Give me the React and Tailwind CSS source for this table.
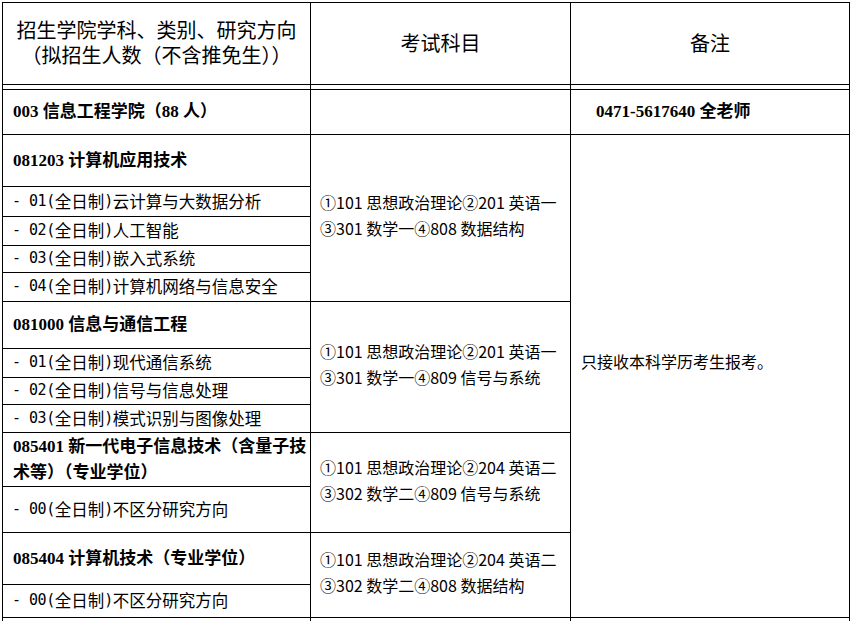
import React from "react";

const SANS = "font-['Noto_Sans_CJK_SC',sans-serif]";
const MONO = "font-['DejaVu_Sans_Mono','Liberation_Mono',monospace] text-[15px] tracking-[-0.5px]";
const HEAD = "font-['Liberation_Serif','Noto_Sans_CJK_SC',serif] font-bold";

function LeftHead({ h, children }) {
  return (
    <div className={`${h} flex items-center border-b border-black pl-[10px] text-[17px] leading-[26px] whitespace-nowrap ${HEAD}`}>
      <div>{children}</div>
    </div>
  );
}

function LeftSub({ h, code, name }) {
  return (
    <div className={`${h} flex items-center border-b border-black pl-[9px] pb-[2px] text-[16.5px] leading-[20px] whitespace-nowrap ${SANS}`}>
      <span className={MONO}>- {code}(</span>
      <span>全日制</span>
      <span className={MONO}>)</span>
      <span>{name}</span>
    </div>
  );
}

function Exam({ h, a, b }) {
  return (
    <div className={`${h} flex items-center border-b border-black pl-[9px] pb-[6px] text-[16px] leading-[26px] whitespace-nowrap ${SANS}`}>
      <div>
        <div>{a}</div>
        <div>{b}</div>
      </div>
    </div>
  );
}

export default function App() {
  return (
    <div className="w-[852px] h-[621px] overflow-hidden bg-white pt-[2px] pl-[2px] text-black">
      <div className="w-[848px] border-t border-l border-r border-black">
        {/* header */}
        <div className={`flex h-[82px] border-b border-black text-[20px] leading-[25px] ${SANS}`}>
          <div className="w-[307px] flex items-center justify-center text-center pb-[4px]">
            <div>
              <div>招生学院学科、类别、研究方向</div>
              <div>（拟招生人数（不含推免生））</div>
            </div>
          </div>
          <div className="w-[260px] border-l border-black flex items-center justify-center pb-[2px]">考试科目</div>
          <div className="w-[279px] border-l border-black flex items-center justify-center pb-[2px]">备注</div>
        </div>
        {/* double line spacer */}
        <div className="flex h-[5px] border-b border-black">
          <div className="w-[307px]" />
          <div className="w-[260px] border-l border-black" />
          <div className="w-[279px] border-l border-black" />
        </div>
        {/* body */}
        <div className="flex">
          <div className="w-[307px] flex flex-col">
            <LeftHead h="h-[45px]">003 信息工程学院（88 人）</LeftHead>
            <LeftHead h="h-[52px]">081203 计算机应用技术</LeftHead>
            <LeftSub h="h-[30px]" code="01" name="云计算与大数据分析" />
            <LeftSub h="h-[29px]" code="02" name="人工智能" />
            <LeftSub h="h-[27px]" code="03" name="嵌入式系统" />
            <LeftSub h="h-[29px]" code="04" name="计算机网络与信息安全" />
            <LeftHead h="h-[47px]">081000 信息与通信工程</LeftHead>
            <LeftSub h="h-[29px]" code="01" name="现代通信系统" />
            <LeftSub h="h-[27px]" code="02" name="信号与信息处理" />
            <LeftSub h="h-[28px]" code="03" name="模式识别与图像处理" />
            <LeftHead h="h-[54px]">
              085401 新一代电子信息技术（含量子技
              <br />
              术等）（专业学位）
            </LeftHead>
            <LeftSub h="h-[46px]" code="00" name="不区分研究方向" />
            <LeftHead h="h-[52px]">085404 计算机技术（专业学位）</LeftHead>
            <LeftSub h="h-[33px]" code="00" name="不区分研究方向" />
            <div className="h-[30px]" />
          </div>
          <div className="w-[260px] border-l border-black flex flex-col">
            <div className="h-[45px] border-b border-black" />
            <Exam h="h-[167px]" a="①101 思想政治理论②201 英语一" b="③301 数学一④808 数据结构" />
            <Exam h="h-[131px]" a="①101 思想政治理论②201 英语一" b="③301 数学一④809 信号与系统" />
            <Exam h="h-[100px]" a="①101 思想政治理论②204 英语二" b="③302 数学二④809 信号与系统" />
            <Exam h="h-[85px]" a="①101 思想政治理论②204 英语二" b="③302 数学二④808 数据结构" />
            <div className="h-[30px]" />
          </div>
          <div className="w-[279px] border-l border-black flex flex-col">
            <div className={`h-[45px] border-b border-black flex items-center pl-[25px] text-[17px] whitespace-nowrap ${HEAD}`}>
              0471-5617640 全老师
            </div>
            <div className={`h-[483px] border-b border-black flex items-center pl-[10px] pb-[30px] text-[16px] ${SANS}`}>
              只接收本科学历考生报考。
            </div>
            <div className="h-[30px]" />
          </div>
        </div>
      </div>
    </div>
  );
}
